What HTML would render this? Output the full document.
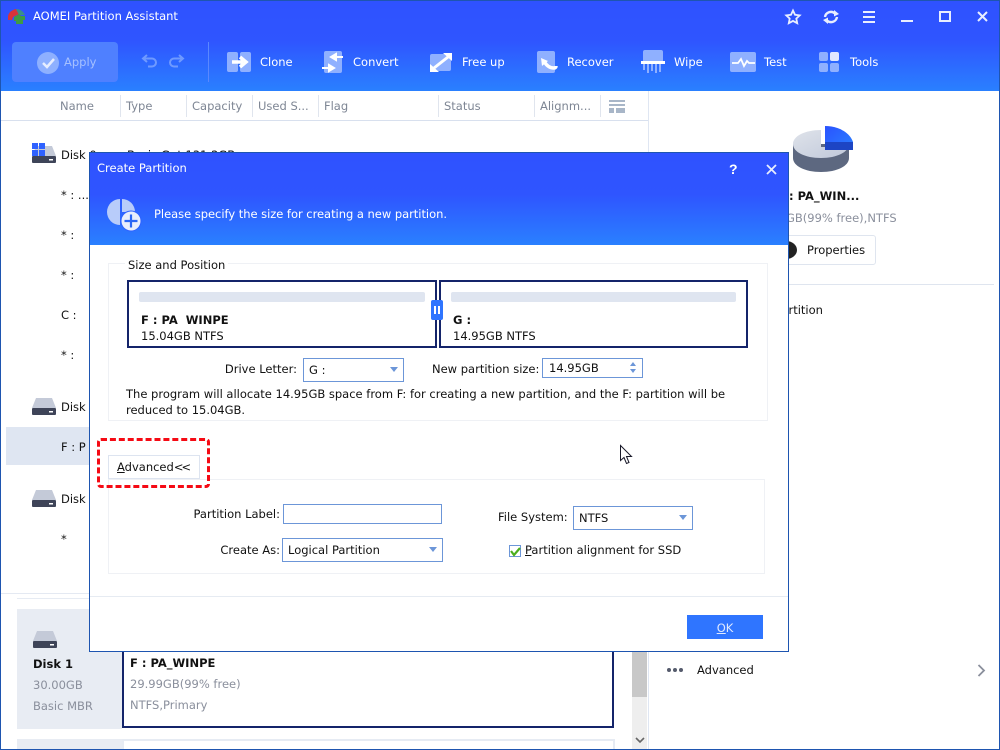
<!DOCTYPE html>
<html><head><meta charset="utf-8"><style>
*{box-sizing:border-box}
html,body{margin:0;padding:0;background:#fff}
body{width:1000px;height:750px;position:relative;overflow:hidden;font-family:"DejaVu Sans","Liberation Sans",sans-serif;font-size:11.5px;color:#111}
.a{position:absolute}
.t{position:absolute;white-space:nowrap;line-height:16px;height:16px;margin-top:-1px}
.r{text-align:right}
.w{color:#fff}
.g{color:#8a8f9c}
.h{color:#7e8694}
.b{font-weight:bold}
.sel{position:absolute;background:#fff;border:1px solid #6c96d8}
.arr{position:absolute;width:0;height:0;border-left:6px solid transparent;border-right:6px solid transparent;border-top:6px solid #6c96d8}
u{text-decoration:underline}
svg{position:absolute;overflow:visible}
</style></head><body>

<div class="a" style="left:0;top:0;width:1000px;height:91px;background:linear-gradient(#2f52ff 0,#2f55ff 45%,#2a80ff 100%)"></div>
<div class="a" style="left:0;top:0;width:1000px;height:1px;background:#1e55b0"></div>
<div class="a" style="left:0;top:0;width:1px;height:750px;background:#1e55b0"></div>
<div class="a" style="left:999px;top:0;width:1px;height:750px;background:#1e55b0"></div>
<div class="a" style="left:0;top:749px;width:1000px;height:1px;background:#1e55b0"></div>

<svg style="left:8px;top:9px" width="18" height="16" viewBox="0 0 18 16"><path d="M0 7C1 3 4 1 8 0l3 5-6 3-1 3H0z" fill="#d8333a"/><path d="M8 0c4 0 7 2 9 6h-6z" fill="#3a8f8a"/><path d="M6 8l5-3 2 2h4v4h-2v4H8v-3H6z" fill="#3f9a45"/></svg>
<div class="t w" style="left:33px;top:9px">AOMEI Partition Assistant</div>

<svg style="left:785px;top:9px" width="16" height="16" viewBox="0 0 16 16"><path d="M8 1.500l2 4.300 4.700.6-3.400 3.200.9 4.600L8 11.900l-4.200 2.300.9-4.600L1.300 6.400l4.700-.6z" fill="none" stroke="#e8eeff" stroke-width="1.800"/></svg>
<svg style="left:823px;top:9px" width="16" height="16" viewBox="0 0 16 16"><path d="M2 8a6 6 0 0 1 10-3.500M14 8a6 6 0 0 1-10 3.500" fill="none" stroke="#e8eeff" stroke-width="2.400"/><path d="M11 1l5 4-5 2.500zM5 15l-5-4 5-2.500z" fill="#e8eeff"/></svg>
<div class="a" style="left:863px;top:11px;width:12px;height:2px;background:#e8eeff"></div>
<div class="a" style="left:863px;top:16px;width:12px;height:2px;background:#e8eeff"></div>
<div class="a" style="left:863px;top:21px;width:12px;height:2px;background:#e8eeff"></div>
<div class="a" style="left:901px;top:20px;width:12px;height:2px;background:#e8eeff"></div>
<div class="a" style="left:939px;top:11px;width:12px;height:11px;border:2px solid #e8eeff"></div>
<svg style="left:977px;top:11px" width="12" height="12" viewBox="0 0 12 12"><path d="M1 1l9 9M10 1l-9 9" stroke="#e8eeff" stroke-width="2"/></svg>

<div class="a" style="left:12px;top:42px;width:106px;height:40px;background:#4f80ff;border-radius:4px"></div>
<div class="a" style="left:37px;top:52px;width:22px;height:22px;border-radius:50%;background:#8eb0ff"></div>
<svg style="left:37px;top:52px" width="22" height="22" viewBox="0 0 22 22"><path d="M6 11l4 4 7-8" fill="none" stroke="#e6edff" stroke-width="2.500"/></svg>
<div class="t" style="left:64px;top:55px;color:#a6c0ff">Apply</div>
<svg style="left:142px;top:54px" width="16" height="14" viewBox="0 0 16 14"><path d="M5 1L1 4.500 5 8M1 4.500h9a4 4 0 0 1 0 8H6" fill="none" stroke="#6f9aff" stroke-width="2"/></svg>
<svg style="left:168px;top:54px" width="16" height="14" viewBox="0 0 16 14"><path d="M11 1l4 3.500L11 8M15 4.500H6a4 4 0 0 0 0 8h4" fill="none" stroke="#6f9aff" stroke-width="2"/></svg>
<div class="a" style="left:208px;top:42px;width:1px;height:40px;background:#5a88ff"></div>

<div class="a" style="left:227px;top:52px;width:11px;height:20px;background:#8fb0ff;border-radius:2px"></div>
<div class="a" style="left:240px;top:52px;width:11px;height:20px;background:#8fb0ff;border-radius:2px"></div>
<svg style="left:232px;top:55px" width="16" height="14" viewBox="0 0 16 14"><path d="M0 7h11M8 2l6 5-6 5" fill="none" stroke="#fff" stroke-width="3.500"/></svg>
<div class="t w" style="left:260px;top:55px">Clone</div>

<div class="a" style="left:324px;top:51px;width:18px;height:22px;background:#8fb0ff;border-radius:2px"></div>
<svg style="left:322px;top:53px" width="21" height="19" viewBox="0 0 21 19"><path d="M21 4H11M14 1L9 4l5 3z" fill="#fff" stroke="#fff" stroke-width="2"/><path d="M0 15h10M7 12l5 3-5 3z" fill="#fff" stroke="#fff" stroke-width="2"/></svg>
<div class="t w" style="left:353px;top:55px">Convert</div>

<div class="a" style="left:430px;top:54px;width:21px;height:17px;background:#8fb0ff;border-radius:2px"></div>
<svg style="left:430px;top:53px" width="22" height="19" viewBox="0 0 22 19"><path d="M13 0h9v8zM0 19v-8l9 8z" fill="#fff"/><path d="M18 4L4 15" stroke="#fff" stroke-width="3"/></svg>
<div class="t w" style="left:462px;top:55px">Free up</div>

<div class="a" style="left:537px;top:51px;width:18px;height:22px;background:#8fb0ff;border-radius:2px"></div>
<svg style="left:540px;top:57px" width="18" height="15" viewBox="0 0 18 15"><path d="M1 1l1 8 6-5z" fill="#fff"/><path d="M4 4c2 4 5 7 10 7 1.500 0 2-1 2-2" fill="none" stroke="#fff" stroke-width="3.500"/></svg>
<div class="t w" style="left:567px;top:55px">Recover</div>

<div class="a" style="left:643px;top:50px;width:20px;height:12px;background:#8fb0ff;border-radius:2px 2px 0 0"></div>
<div class="a" style="left:641px;top:61px;width:24px;height:3px;background:#fff"></div>
<svg style="left:643px;top:64px" width="20" height="9" viewBox="0 0 20 9"><path d="M1 0v6M5 0v9M9 0v7M13 0v9M17 0v8" stroke="#8fb0ff" stroke-width="2"/></svg>
<div class="t w" style="left:674px;top:55px">Wipe</div>

<div class="a" style="left:730px;top:52px;width:26px;height:20px;background:#8fb0ff;border-radius:2px"></div>
<svg style="left:732px;top:57px" width="23" height="10" viewBox="0 0 23 10"><path d="M0 6h6l3-4 3 7 3-5 2 2h6" fill="none" stroke="#fff" stroke-width="1.800"/></svg>
<div class="t w" style="left:764px;top:55px">Test</div>

<div class="a" style="left:819px;top:52px;width:9px;height:9px;background:#8fb0ff;border-radius:2px"></div>
<div class="a" style="left:830px;top:52px;width:9px;height:9px;background:#e0e8ff;border-radius:2px"></div>
<div class="a" style="left:819px;top:63px;width:9px;height:9px;background:#8fb0ff;border-radius:2px"></div>
<div class="a" style="left:830px;top:63px;width:9px;height:9px;background:#8fb0ff;border-radius:2px"></div>
<div class="t w" style="left:850px;top:55px">Tools</div>

<div class="a" style="left:1px;top:120px;width:647px;height:1px;background:#d8e0ee"></div>
<div class="a" style="left:648px;top:91px;width:1px;height:658px;background:#dfe6f2"></div>
<div class="t h" style="left:60px;top:99px">Name</div>
<div class="a" style="left:120px;top:95px;width:1px;height:22px;background:#e0e5ee"></div>
<div class="t h" style="left:126px;top:99px">Type</div>
<div class="a" style="left:186px;top:95px;width:1px;height:22px;background:#e0e5ee"></div>
<div class="t h" style="left:192px;top:99px">Capacity</div>
<div class="a" style="left:252px;top:95px;width:1px;height:22px;background:#e0e5ee"></div>
<div class="t h" style="left:258px;top:99px">Used S...</div>
<div class="a" style="left:318px;top:95px;width:1px;height:22px;background:#e0e5ee"></div>
<div class="t h" style="left:324px;top:99px">Flag</div>
<div class="a" style="left:438px;top:95px;width:1px;height:22px;background:#e0e5ee"></div>
<div class="t h" style="left:444px;top:99px">Status</div>
<div class="a" style="left:534px;top:95px;width:1px;height:22px;background:#e0e5ee"></div>
<div class="t h" style="left:540px;top:99px">Alignm...</div>
<div class="a" style="left:600px;top:95px;width:1px;height:22px;background:#e0e5ee"></div>
<div class="a" style="left:609px;top:100px;width:16px;height:2px;background:#a8b6c8"></div>
<div class="a" style="left:609px;top:104px;width:16px;height:2px;background:#a8b6c8"></div>
<div class="a" style="left:609px;top:108px;width:5px;height:5px;background:#a8b6c8"></div>
<div class="a" style="left:616px;top:108px;width:9px;height:5px;background:#a8b6c8"></div>

<svg style="left:32px;top:143px" width="24" height="20" viewBox="0 0 24 20"><path d="M4 3h16l4 10H0z" fill="#c4cad8"/><rect y="13" width="24" height="7" rx="1" fill="#3e4458"/><rect x="17" y="16" width="4" height="1.500" fill="#fff"/><path d="M0 0h6v6H0zM7 0h6v6H7zM0 7h6v6H0zM7 7h6v6H7z" fill="#2f62ff"/></svg>
<div class="t" style="left:61px;top:148px">Disk 0</div>
<div class="t" style="left:127px;top:148px">Basic Gpt 131.2GB</div>
<div class="t" style="left:61px;top:188px">* : ...</div>
<div class="t" style="left:61px;top:228px">* :</div>
<div class="t" style="left:61px;top:268px">* :</div>
<div class="t" style="left:61px;top:308px">C :</div>
<div class="t" style="left:61px;top:348px">* :</div>
<svg style="left:32px;top:398px" width="24" height="18" viewBox="0 0 24 18"><path d="M4 0h16l4 10H0z" fill="#c4cad8"/><rect y="10" width="24" height="7" rx="1" fill="#3e4458"/><rect x="17" y="13" width="4" height="1.500" fill="#fff"/></svg>
<div class="t" style="left:61px;top:400px">Disk 1</div>
<div class="a" style="left:6px;top:427px;width:642px;height:38px;background:#dfe6f2"></div>
<div class="t" style="left:61px;top:440px">F : P</div>
<svg style="left:32px;top:490px" width="24" height="18" viewBox="0 0 24 18"><path d="M4 0h16l4 10H0z" fill="#c4cad8"/><rect y="10" width="24" height="7" rx="1" fill="#3e4458"/><rect x="17" y="13" width="4" height="1.500" fill="#fff"/></svg>
<div class="t" style="left:61px;top:492px">Disk 2</div>
<div class="t" style="left:61px;top:532px">*</div>

<div class="a" style="left:1px;top:593px;width:631px;height:1px;background:#e4e9f2"></div>
<div class="a" style="left:17px;top:598px;width:615px;height:1px;background:#e6ebf3"></div>
<div class="a" style="left:17px;top:609px;width:105px;height:120px;background:#e8ecf3"></div>
<div class="a" style="left:122px;top:640px;width:492px;height:88px;background:#fff;border:2px solid #14246a"></div>
<svg style="left:33px;top:631px" width="24" height="18" viewBox="0 0 24 18"><path d="M4 0h16l4 10H0z" fill="#c4cad8"/><rect y="10" width="24" height="7" rx="1" fill="#3e4458"/><rect x="17" y="13" width="4" height="1.500" fill="#fff"/></svg>
<div class="t b" style="left:33px;top:657px">Disk 1</div>
<div class="t g" style="left:33px;top:678px">30.00GB</div>
<div class="t g" style="left:33px;top:699px">Basic MBR</div>
<div class="t b" style="left:130px;top:656px">F : PA_WINPE</div>
<div class="t g" style="left:130px;top:677px">29.99GB(99% free)</div>
<div class="t g" style="left:130px;top:698px">NTFS,Primary</div>
<div class="a" style="left:17px;top:739px;width:105px;height:10px;background:#e8ecf3"></div>
<div class="a" style="left:122px;top:739px;width:493px;height:10px;background:#fff;border:2px solid #e6ebf3;border-bottom:0"></div>
<div class="a" style="left:632px;top:600px;width:15px;height:149px;background:#eee"></div>
<div class="a" style="left:632px;top:600px;width:15px;height:97px;background:#c8c8c8"></div>
<svg style="left:635px;top:737px" width="10" height="7" viewBox="0 0 10 7"><path d="M1 1l4 4 4-4" fill="none" stroke="#666" stroke-width="1.600"/></svg>

<svg style="left:793px;top:126px" width="60" height="47" viewBox="0 0 60 47"><defs><linearGradient id="pb" x1="0" y1="0" x2="1" y2="1"><stop offset="0" stop-color="#2a52ff"/><stop offset="1" stop-color="#2a80ff"/></linearGradient><linearGradient id="pg" x1="0" y1="0" x2="1" y2="1"><stop offset="0" stop-color="#dfe3ea"/><stop offset="1" stop-color="#c0c8da"/></linearGradient></defs><path d="M0 18v14c0 8 12 14 28 14s28-6 28-14V18z" fill="#5d6880"/><path d="M28 4C12 4 0 10 0 18c0 8 12 14 28 14s28-6 28-14v-0 l0 3H28z" fill="url(#pg)"/><path d="M32 0c14 0 25 7 28 16v8H32z" fill="url(#pb)"/><path d="M32 16h28v8H32z" fill="#1d45c4"/></svg>
<div class="t b" style="left:789px;top:189px">: PA_WIN...</div>
<div class="t g" style="left:786px;top:211px">GB(99% free),NTFS</div>
<div class="a" style="left:770px;top:235px;width:106px;height:30px;border:1px solid #dfe5ef;border-radius:3px"></div>
<div class="a" style="left:775px;top:241px;width:22px;height:18px;border-radius:50%;background:#222"></div>
<div class="t" style="left:807px;top:243px">Properties</div>
<div class="a" style="left:650px;top:284px;width:344px;height:1px;background:#dfe5ef"></div>
<div class="t" style="left:775px;top:303px">Partition</div>
<div class="a" style="left:667px;top:668px;width:4px;height:4px;border-radius:50%;background:#555b6c"></div>
<div class="a" style="left:673px;top:668px;width:4px;height:4px;border-radius:50%;background:#555b6c"></div>
<div class="a" style="left:679px;top:668px;width:4px;height:4px;border-radius:50%;background:#555b6c"></div>
<div class="t" style="left:697px;top:663px">Advanced</div>
<svg style="left:977px;top:664px" width="9" height="13" viewBox="0 0 9 13"><path d="M1.500 1l5.500 5.500-5.500 5.500" fill="none" stroke="#8a8f9c" stroke-width="1.800"/></svg>

<!-- dialog -->
<div class="a" style="left:89px;top:152px;width:700px;height:500px;background:#fff;border:1px solid #1e55b0"></div>
<div class="a" style="left:90px;top:153px;width:698px;height:92px;background:linear-gradient(#2f52ff 0,#2f55ff 45%,#2a80ff 100%)"></div>
<div class="t w" style="left:97px;top:161px">Create Partition</div>
<div class="t w" style="left:729px;top:162px;font-size:14px;font-family:'Liberation Sans',sans-serif;font-weight:bold">?</div>
<svg style="left:766px;top:164px" width="12" height="12" viewBox="0 0 12 12"><path d="M1 1l9 9M10 1l-9 9" stroke="#e8eeff" stroke-width="1.800"/></svg>
<svg style="left:108px;top:198px" width="33" height="33" viewBox="0 0 33 33"><path d="M12 1a13 13 0 1 0 0 26z" fill="#b8ccfa"/><path d="M14 1a13 13 0 0 1 13 13H14z" fill="#b8ccfa"/><circle cx="23" cy="23" r="10" fill="#e8eefc" stroke="#2f62ff" stroke-width="1"/><path d="M23 16.500v13M16.500 23h13" stroke="#2a66f5" stroke-width="2.200"/></svg>
<div class="t w" style="left:154px;top:207px;letter-spacing:-.03px">Please specify the size for creating a new partition.</div>

<div class="a" style="left:108px;top:263px;width:660px;height:158px;border:1px solid #eff1f5"></div>
<div class="t" style="left:125px;top:258px;background:#fff;padding:0 3px">Size and Position</div>
<div class="a" style="left:127px;top:280px;width:310px;height:68px;border:2px solid #14246a"></div>
<div class="a" style="left:439px;top:280px;width:309px;height:68px;border:2px solid #14246a"></div>
<div class="a" style="left:139px;top:292px;width:286px;height:10px;background:#dfe5f0;border-radius:2px"></div>
<div class="a" style="left:451px;top:292px;width:285px;height:10px;background:#dfe5f0;border-radius:2px"></div>
<div class="a" style="left:431px;top:300px;width:12px;height:20px;background:#2f75ff;border-radius:2px"></div>
<div class="a" style="left:434px;top:306px;width:2px;height:8px;background:#fff"></div>
<div class="a" style="left:438px;top:306px;width:2px;height:8px;background:#fff"></div>
<div class="t b" style="left:141px;top:313px">F : PA&nbsp; WINPE</div>
<div class="t" style="left:141px;top:329px">15.04GB NTFS</div>
<div class="t b" style="left:453px;top:313px">G :</div>
<div class="t" style="left:453px;top:329px">14.95GB NTFS</div>

<div class="t r" style="left:196px;width:101px;top:362px">Drive Letter:</div>
<div class="sel" style="left:303px;top:358px;width:101px;height:24px"></div>
<div class="t" style="left:309px;top:363px">G :</div>
<div class="arr" style="top:367px;border-left-width:4px;border-right-width:4px;border-top-width:5px;left:390px"></div>
<div class="t" style="left:432px;top:362px">New partition size:</div>
<div class="sel" style="left:542px;top:358px;width:101px;height:20px"></div>
<div class="t" style="left:549px;top:361px">14.95GB</div>
<div class="a" style="left:630px;top:362px;width:0;height:0;border-left:3.500px solid transparent;border-right:3.500px solid transparent;border-bottom:4px solid #6c96d8"></div>
<div class="a" style="left:630px;top:369px;width:0;height:0;border-left:3.500px solid transparent;border-right:3.500px solid transparent;border-top:4px solid #6c96d8"></div>
<div class="t" style="left:126px;top:387px">The program will allocate 14.95GB space from F: for creating a new partition, and the F: partition will be</div>
<div class="t" style="left:126px;top:403px">reduced to 15.04GB.</div>

<div class="a" style="left:108px;top:479px;width:657px;height:95px;border:1px solid #eff1f5"></div>
<div class="a" style="left:108px;top:455px;width:92px;height:24px;background:#fff;border:1px solid #dde4f0"></div>
<div class="t" style="left:117px;top:460px"><u>A</u>dvanced<span style="letter-spacing:-2px">&lt;&lt;</span></div>
<div class="a" style="left:97px;top:438px;width:113px;height:50px;border:3px dashed #f50a14;border-radius:4px"></div>

<div class="t r" style="left:160px;width:120px;top:507px">Partition Label:</div>
<div class="sel" style="left:283px;top:504px;width:159px;height:20px"></div>
<div class="t r" style="left:160px;width:120px;top:543px">Create As:</div>
<div class="sel" style="left:282px;top:538px;width:161px;height:24px"></div>
<div class="t" style="left:288px;top:543px">Logical Partition</div>
<div class="arr" style="left:429px;top:547px;border-left-width:4px;border-right-width:4px;border-top-width:5px"></div>
<div class="t" style="left:498px;top:510px">File System:</div>
<div class="sel" style="left:573px;top:506px;width:120px;height:24px"></div>
<div class="t" style="left:579px;top:511px">NTFS</div>
<div class="arr" style="left:679px;top:515px;border-left-width:4px;border-right-width:4px;border-top-width:5px"></div>
<div class="a" style="left:509px;top:545px;width:12px;height:12px;background:#fff;border:1px solid #6c96d8"></div>
<svg style="left:509px;top:545px" width="13" height="13" viewBox="0 0 13 13"><path d="M2 6l3 4 6-7" fill="none" stroke="#4cae1e" stroke-width="2.200"/></svg>
<div class="t" style="left:525px;top:543px"><u>P</u>artition alignment for SSD</div>

<svg style="left:620px;top:445px" width="14" height="21" viewBox="0 0 14 21"><path d="M.5.500v15l3.500-3 2.500 6 2.500-1-2.500-6h5z" fill="#fff" stroke="#1a1a2a" stroke-width="1"/></svg>

<div class="a" style="left:90px;top:596px;width:698px;height:1px;background:#e6ebf2"></div>
<div class="a" style="left:687px;top:615px;width:76px;height:24px;background:#2f75ff"></div>
<div class="t" style="left:687px;width:76px;top:621px;text-align:center;color:#dfe9ff"><u>O</u>K</div>

</body></html>
